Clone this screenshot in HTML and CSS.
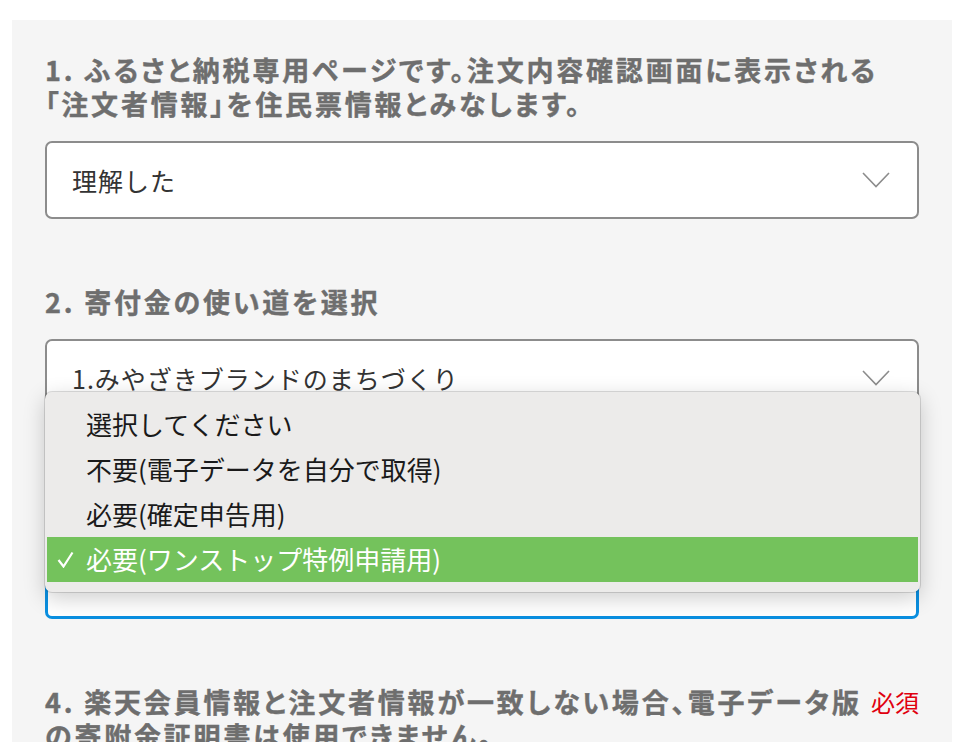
FILE: index.html
```html
<!DOCTYPE html>
<html lang="ja">
<head>
<meta charset="utf-8">
<link rel="stylesheet" href="styles.css">
</head>
<body>
<div class="panel">
  <section class="field">
    <h2 class="q">1. ふるさと納税専用ページです。注文内容確認画面に表示される「注文者情報」を住民票情報とみなします。</h2>
    <div class="select">
      <span class="value">理解した</span>
      <svg class="chev" width="28" height="16" viewBox="0 0 28 16"><polyline points="1,1 14,14.5 27,1" fill="none" stroke="#8c8c8c" stroke-width="1.6"/></svg>
    </div>
  </section>
  <section class="field">
    <h2 class="q">2. 寄付金の使い道を選択</h2>
    <div class="select">
      <span class="value">1.みやざきブランドのまちづくり</span>
      <svg class="chev" width="28" height="16" viewBox="0 0 28 16"><polyline points="1,1 14,14.5 27,1" fill="none" stroke="#8c8c8c" stroke-width="1.6"/></svg>
    </div>
  </section>
  <section class="field field-open">
    <h2 class="q covered">3. 寄附金受領証明書の発行</h2>
    <div class="select focus">
      <span class="value">必要(ワンストップ特例申請用)</span>
      <svg class="chev" width="28" height="16" viewBox="0 0 28 16"><polyline points="1,1 14,14.5 27,1" fill="none" stroke="#8c8c8c" stroke-width="1.6"/></svg>
      <ul class="menu">
        <li class="opt">選択してください</li>
        <li class="opt">不要(電子データを自分で取得)</li>
        <li class="opt">必要(確定申告用)</li>
        <li class="opt checked"><svg class="tick" width="17" height="17" viewBox="0 0 17 17"><polyline points="1.5,9 6.5,15.5 15.5,1.5" fill="none" stroke="#ffffff" stroke-width="2.2"/></svg>必要(ワンストップ特例申請用)</li>
      </ul>
    </div>
  </section>
  <section class="field">
    <div class="q-row">
      <h2 class="q">4. 楽天会員情報と注文者情報が一致しない場合、電子データ版の寄附金証明書は使用できません。</h2>
      <span class="req">必須</span>
    </div>
  </section>
</div>
</body>
</html>
```
FILE: styles.css
```css
html, body {
  margin: 0;
  padding: 0;
  background: #ffffff;
}
body {
  font-family: "Noto Sans CJK JP", "Noto Sans", sans-serif;
  overflow: hidden;
  height: 742px;
}
.panel {
  margin: 20px 20px 0 12px;
  background: #f5f5f5;
  padding: 33px 33px 0 33px;
  min-height: 800px;
  display: flex;
  flex-direction: column;
  gap: 66px;
}
.field {
  display: flex;
  flex-direction: column;
  gap: 20px;
}
.field-open {
  margin-top: 4px;
}
.q {
  margin: 0;
  font-size: 27px;
  line-height: 34px;
  font-weight: 700;
  color: #6e6e6e;
  letter-spacing: 2.8px;
  font-feature-settings: "palt";
  -webkit-text-stroke: 0.4px #6e6e6e;
}
.q.covered {
  visibility: hidden;
}
.q-row {
  display: flex;
  align-items: flex-start;
  gap: 4px;
}
.q-row .q {
  flex: 1;
  margin-right: -4px;
}
.req {
  font-size: 24px;
  line-height: 34px;
  color: #e0000f;
  white-space: nowrap;
}
.select {
  position: relative;
  height: 78px;
  box-sizing: border-box;
  border: 2px solid #8c8c8c;
  border-radius: 7px;
  background: #ffffff;
  display: flex;
  align-items: center;
  justify-content: space-between;
  padding: 0 27px 0 25px;
}
.select.focus {
  border: 3px solid #0a8fe0;
  padding: 0 26px 0 24px;
}
.select.focus .value,
.select.focus .chev {
  visibility: hidden;
}
.value {
  font-size: 25px;
  color: #333333;
  line-height: 34px;
  letter-spacing: 1px;
}
.chev {
  display: block;
}
.menu {
  position: absolute;
  left: -3px;
  right: -4px;
  top: -152px;
  margin: 0;
  padding: 10px 2px;
  list-style: none;
  background: #ecebea;
  border-radius: 7px;
  box-shadow: 0 0 0 1px rgba(0, 0, 0, 0.13), 0 6px 22px rgba(0, 0, 0, 0.2);
  z-index: 2;
  visibility: visible;
}
.opt {
  height: 45px;
  line-height: 44px;
  font-size: 26px;
  color: #1a1a1a;
  padding-left: 39px;
  position: relative;
}
.opt.checked {
  background: #74c25c;
  color: #ffffff;
}
.tick {
  position: absolute;
  left: 10px;
  top: 14px;
}
```
